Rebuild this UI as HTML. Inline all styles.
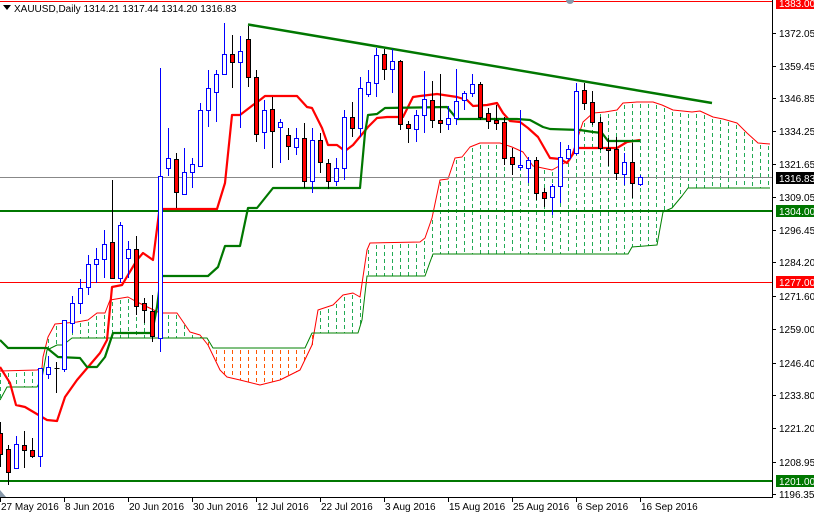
<!DOCTYPE html>
<html><head><meta charset="utf-8"><style>
html,body{margin:0;padding:0;background:#fff;}
svg{display:block;font-family:"Liberation Sans",sans-serif;font-size:10px;}
</style></head><body>
<svg id="c" width="814" height="514" xmlns="http://www.w3.org/2000/svg"></svg>
<script>
(function(){
var s='';
function L(x1,y1,x2,y2,c,w,extra){s+='<line x1="'+x1+'" y1="'+y1+'" x2="'+x2+'" y2="'+y2+'" stroke="'+c+'" stroke-width="'+(w||1)+'" '+(extra||'')+'/>';}
function P(pts,c,w,extra){s+='<polyline fill="none" points="'+pts.map(function(p){return p[0]+','+p[1]}).join(' ')+'" stroke="'+c+'" stroke-width="'+w+'" stroke-linejoin="round" '+(extra||'')+'/>';}
function interp(a,xx){if(xx<=a[0][0])return a[0][1];for(var i=1;i<a.length;i++){if(xx<=a[i][0]){var t=(xx-a[i-1][0])/(a[i][0]-a[i-1][0]);return a[i-1][1]+t*(a[i][1]-a[i-1][1]);}}return a[a.length-1][1];}
var SA=[[0,371],[37,370],[42,368],[43,357],[48,337],[55,324],[77,322],[88,320],[97,313],[105,313],[110,300],[128,297],[137,302],[160,313],[177,313],[190,332],[200,335],[208,345],[220,370],[227,377],[240,380],[260,385],[280,380],[300,370],[312,345],[318,310],[333,305],[343,295],[353,293],[360,297],[367,250],[370,243],[420,242],[425,238],[432,218],[440,180],[448,179],[455,158],[462,157],[470,147],[480,143],[500,143],[512,147],[523,152],[533,166],[552,170],[570,160],[577,140],[583,122],[593,113],[605,112],[617,110],[623,103],[637,102],[653,102],[662,105],[673,110],[692,112],[700,111],[713,117],[723,119],[737,123],[747,133],[758,143],[770,144]];
var SB=[[0,400],[7,387],[37,387],[42,378],[47,350],[57,345],[63,345],[72,338],[207,338],[213,348],[305,348],[312,333],[358,333],[362,320],[367,276],[425,276],[430,262],[433,254],[628,254],[632,247],[657,245],[663,212],[672,208],[682,196],[688,188],[770,188]];
for(var hx=0;hx<=768;hx+=8){var a=interp(SA,hx),b=interp(SB,hx);var tp=Math.round(Math.min(a,b)),bt=Math.round(Math.max(a,b));var col=a<b?'#22aa55':'#ff5500';
for(var yy=tp+2;yy<bt;yy+=7){var hh=Math.min(4,bt-yy);s+='<rect x="'+hx+'" y="'+yy+'" width="1" height="'+hh+'" fill="'+col+'"/>';}}
P(SA,'#ff0000',1);
P(SB,'#008000',1);
L(0,1.5,772,1.5,'#ff0000',1);
L(0,177.5,772,177.5,'#888',1);
L(0,211,772,211,'#007700',2);
L(0,282.5,772,282.5,'#ff0000',1);
L(0,481,772,481,'#007700',2);
L(248,24.5,712,103,'#007700',2.5);
P([[0,367],[10,383],[16,405],[25,407],[47,420],[57,421],[65,397],[77,380],[100,353],[107,340],[112,287],[122,285],[137,260],[143,253],[153,260],[159,213],[162,209],[217,209],[225,183],[232,115],[240,115],[253,105],[260,100],[265,96],[297,96],[307,107],[312,108],[322,128],[328,145],[337,145],[345,151],[353,145],[368,127],[377,118],[387,117],[403,117],[413,97],[420,96],[437,94],[457,97],[467,100],[473,106],[487,105],[497,103],[503,113],[510,121],[520,122],[528,128],[538,137],[550,158],[560,159],[567,163],[577,148],[617,148],[627,142],[640,140]],'#ff0000',2.2);
P([[0,340],[8,348],[47,348],[58,357],[80,358],[87,367],[97,367],[105,357],[113,333],[152,333],[157,307],[161,276],[208,276],[218,267],[225,246],[240,246],[248,208],[257,208],[273,188],[360,188],[365,133],[368,115],[377,114],[385,108],[447,107],[457,119],[517,119],[530,120],[543,127],[550,129],[580,130],[593,132],[602,133],[608,141],[640,141]],'#007700',2.2);
var C=[[0,433,454,422,467,0],[8,449,472,445,485,0],[16,444,468,436,468,1],[24,445,450,431,468,0],[32,450,456,438,458,0],[40,368,456,368,467,1],[48,367,374,356,379,1],[56,368,369,362,393,2],[64,320,369,320,372,1],[72,303,323,296,333,1],[80,288,303,279,314,1],[88,264,287,255,295,1],[96,259,264,248,283,1],[104,244,259,230,278,1],[112,242,278,180,278,0],[120,225,278,222,283,1],[128,249,258,241,278,1],[136,249,306,236,315,0],[144,303,310,298,323,0],[152,311,336,295,342,0],[160,176,338,68,352,1],[168,158,168,128,176,1],[176,159,192,153,208,0],[184,172,194,148,194,1],[192,164,172,158,188,1],[200,110,166,103,166,1],[208,88,110,70,127,1],[216,74,92,70,122,1],[224,54,74,23,74,1],[232,54,62,35,88,0],[240,51,62,36,128,1],[248,39,77,26,87,0],[256,77,134,70,142,0],[264,110,132,100,149,1],[272,109,131,97,168,0],[280,122,127,119,163,1],[288,135,146,128,160,0],[296,138,147,128,155,1],[304,138,181,123,188,0],[312,140,181,128,193,1],[320,140,162,133,173,0],[328,163,181,159,189,0],[336,168,181,158,186,1],[344,117,168,110,180,1],[352,117,128,102,137,0],[360,88,128,77,137,1],[368,82,94,70,97,1],[376,55,83,48,97,1],[384,54,69,49,80,0],[392,61,69,49,93,1],[400,61,124,60,130,0],[408,124,128,121,143,0],[416,115,129,110,142,1],[424,99,115,71,133,1],[432,100,120,81,128,0],[440,120,123,74,133,0],[448,118,124,106,130,1],[456,101,118,69,125,1],[464,93,100,91,110,1],[472,84,93,74,97,1],[480,84,117,82,120,0],[488,113,121,108,129,0],[496,120,123,105,130,0],[504,122,158,117,165,0],[512,157,164,148,175,0],[520,165,166,110,170,1],[528,160,168,157,183,1],[536,160,193,157,200,0],[544,192,198,188,207,0],[552,186,197,184,215,1],[560,157,186,142,203,1],[568,149,158,145,160,1],[576,91,153,83,155,1],[584,90,103,83,110,0],[592,102,122,91,125,0],[600,122,148,117,150,0],[608,148,150,138,166,0],[616,149,173,137,180,0],[624,162,174,153,185,1],[632,162,183,143,198,0],[640,177,184,175,186,1]];
C.forEach(function(c){var x=c[0]+0.5,bull=c[5]==1,dj=c[5]==2;var wc=bull?'#0000ff':'#000';
L(x,c[3],x,c[4],wc,1);
if(dj){L(x-2,c[1]+0.5,x+3,c[1]+0.5,'#000',1);return;}
var h=Math.max(c[2]-c[1],2);
s+='<rect x="'+(x-2)+'" y="'+(c[1]+0.5)+'" width="4" height="'+h+'" fill="'+(bull?'#fff':'#ff0000')+'" stroke="'+(bull?'#0000ff':'#000')+'" stroke-width="1"/>';});
s+='<rect x="773" y="0" width="41" height="514" fill="#fff"/>';
s+='<rect x="0" y="498" width="814" height="16" fill="#fff"/>';
L(772.5,0,772.5,498,'#000',1);
L(0,497.5,773,497.5,'#000',1);
var labs=[[33,'1372.05'],[66,'1359.45'],[98,'1346.85'],[131,'1334.25'],[164,'1321.65'],[197,'1309.05'],[230,'1296.45'],[262,'1284.20'],[296,'1271.60'],[329,'1259.00'],[363,'1246.40'],[395,'1233.80'],[428,'1221.20'],[462,'1208.95'],[494,'1196.35']];
labs.forEach(function(l){L(772,l[0]+0.5,776,l[0]+0.5,'#000',1);s+='<text x="779" y="'+(l[0]+4)+'" fill="#000">'+l[1]+'</text>';});
var box=[[3,'1383.00','#ff0000'],[178,'1316.83','#000'],[211,'1304.00','#007700'],[282,'1277.00','#ff0000'],[481,'1201.00','#007700']];
box.forEach(function(b){s+='<rect x="776" y="'+(b[0]-6)+'" width="38" height="12" fill="'+b[2]+'"/><text x="779" y="'+(b[0]+4)+'" fill="#fff">'+b[1]+'</text>';});
var d=['27 May 2016','8 Jun 2016','20 Jun 2016','30 Jun 2016','12 Jul 2016','22 Jul 2016','3 Aug 2016','15 Aug 2016','25 Aug 2016','6 Sep 2016','16 Sep 2016'];
d.forEach(function(t,i){var x=i*64;L(x+0.5,497,x+0.5,502,'#000',1);s+='<text x="'+(x+1)+'" y="510" fill="#000">'+t+'</text>';});
s+='<polygon points="0,490 6,497 0,497" fill="#8899aa"/>';
s+='<circle cx="570" cy="0" r="4" fill="#8899aa"/>';
s+='<polygon points="3,5 11,5 7,10" fill="#000"/>';
s+='<text x="14" y="12" fill="#000">XAUUSD,Daily  1314.21 1317.44 1314.20 1316.83</text>';
document.getElementById('c').innerHTML=s;
})();
</script>
</body></html>
